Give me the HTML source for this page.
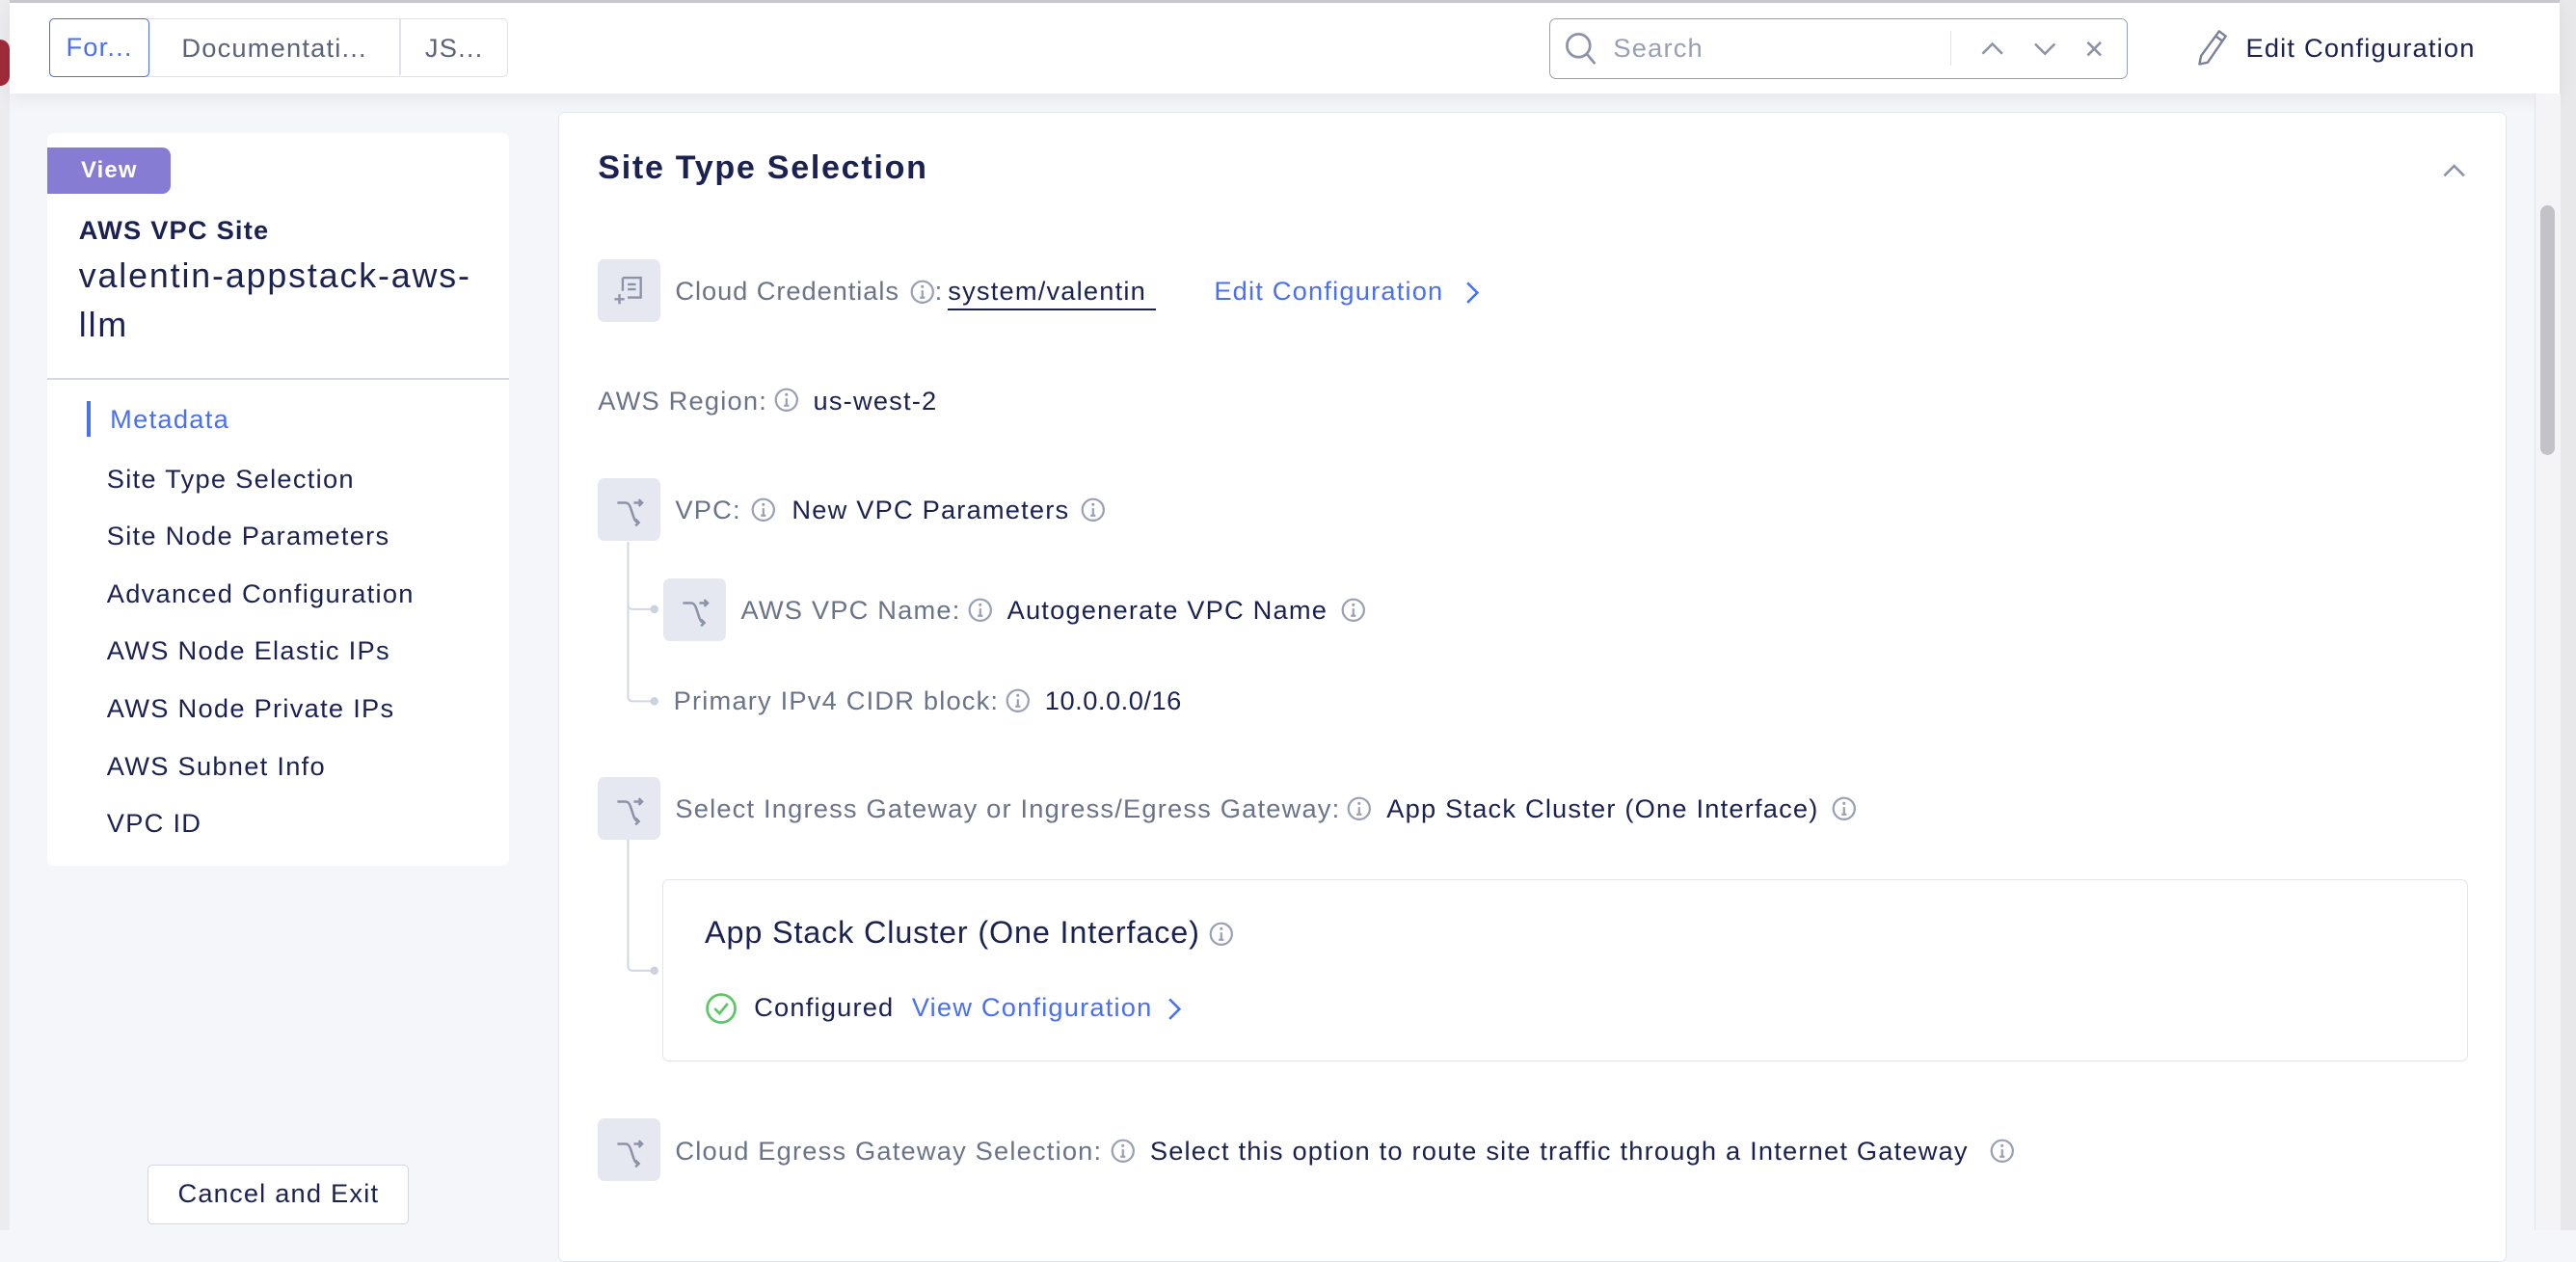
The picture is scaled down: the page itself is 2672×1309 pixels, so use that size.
<!DOCTYPE html>
<html><head><meta charset="utf-8"><style>
html,body{margin:0;padding:0;}
body{width:1568px;height:749px;zoom:1.70408;overflow:hidden;position:relative;background:#f5f6f9;font-family:"Liberation Sans",sans-serif;color:#1b2150;letter-spacing:0.7px;}
.a{position:absolute;white-space:nowrap;}
.lbl{color:#6b7388;font-size:16px;}
.val{color:#1b2150;font-size:16px;}
.ib{width:38px;height:38px;background:#e6e8f1;border-radius:4px;}
.nav{position:absolute;left:65px;font-size:16px;color:#1b2150;letter-spacing:0.75px;}
</style></head><body>
<div class="a" style="left:0;top:0;width:6px;height:749px;background:#ececef;"></div>
<div class="a" style="left:0;top:24px;width:6px;height:28px;background:#a02a3a;border-radius:0 14px 14px 0;"></div>
<div class="a" style="left:1558px;top:0;width:10px;height:749px;background:#e8e8ea;"></div>
<div class="a" style="left:6px;top:0;width:1552px;height:57px;background:#fff;border-top:2px solid #c8c8cc;box-sizing:border-box;box-shadow:0 4px 10px rgba(0,0,0,0.06);"></div>
<div class="a" style="left:30px;top:11px;width:279px;height:36px;border:1px solid #dfe2ec;border-radius:3px;box-sizing:border-box;background:#fff;"></div>
<div class="a" style="left:30px;top:11px;width:61px;height:36px;border:1px solid #4a6ff0;border-radius:3px;box-sizing:border-box;color:#4a6ff0;font-size:16px;line-height:34px;text-align:center;">For...</div>
<div class="a" style="left:91px;top:11px;width:152px;height:36px;line-height:36px;text-align:center;font-size:16px;color:#5c6378;">Documentati...</div>
<div class="a" style="left:243px;top:12px;width:1px;height:34px;background:#dfe2ec;"></div>
<div class="a" style="left:244px;top:11px;width:65px;height:36px;line-height:36px;text-align:center;font-size:16px;color:#5c6378;">JS...</div>
<div class="a" style="left:943px;top:11px;width:352px;height:37px;border:1px solid #9aa0b3;border-radius:4px;box-sizing:border-box;background:#fff;"></div>
<svg class="a" style="left:952px;top:19px" width="22" height="22" viewBox="0 0 22 22"><circle cx="9" cy="9" r="7" fill="none" stroke="#8c93a8" stroke-width="1.6"/><line x1="14" y1="14" x2="19" y2="20" stroke="#8c93a8" stroke-width="1.6"/></svg>
<div class="a" style="left:982px;top:20px;font-size:16px;color:#9aa0b3;">Search</div>
<div class="a" style="left:1187px;top:19px;width:1px;height:21px;background:#dfe2ec;"></div>
<svg class="a" style="left:1205px;top:22px" width="80" height="16" viewBox="0 0 80 16"><path d="M2 11 L8 5 L14 11" fill="none" stroke="#8c93a8" stroke-width="1.5"/><path d="M34 5 L40 11 L46 5" fill="none" stroke="#8c93a8" stroke-width="1.5"/><path d="M66 4 L74 12 M74 4 L66 12" stroke="#8c93a8" stroke-width="1.5"/></svg>
<svg class="a" style="left:1337px;top:17px" width="22" height="24" viewBox="0 0 22 24"><path d="M14 2 L18 5 L7 21 L2 22 L3 17 Z M12 5 L16 8" fill="none" stroke="#7a8196" stroke-width="1.4" stroke-linejoin="round"/></svg>
<div class="a" style="left:1367px;top:20px;font-size:16px;color:#1b2150;">Edit Configuration</div>
<div class="a" style="left:1543px;top:57px;width:15px;height:692px;background:#f4f4f6;border-left:1px solid #e4e4e8;"></div>
<div class="a" style="left:1546px;top:125px;width:9px;height:152px;background:#c3c3c7;border-radius:5px;"></div>
<div class="a" style="left:29px;top:81px;width:281px;height:446px;background:#fff;border-radius:4px;"></div>
<div class="a" style="left:29px;top:90px;width:75px;height:28px;background:#877cd4;border-radius:0 5px 5px 0;color:#fff;font-weight:bold;font-size:14px;line-height:28px;text-align:center;">View</div>
<div class="a" style="left:48px;top:131px;font-weight:bold;font-size:16px;color:#1b2150;">AWS VPC Site</div>
<div class="a" style="left:48px;top:153px;font-size:21px;line-height:30px;color:#1b2150;letter-spacing:1.1px;">valentin-appstack-aws-<br>llm</div>
<div class="a" style="left:29px;top:230px;width:281px;height:1px;background:#d3d6e3;"></div>
<div class="a" style="left:53px;top:244px;width:2px;height:22px;background:#4a6ff0;"></div>
<div class="a" style="left:67px;top:246px;font-size:16px;color:#4a6ff0;letter-spacing:0.75px;">Metadata</div>
<div class="nav" style="top:282px">Site Type Selection</div>
<div class="nav" style="top:317px">Site Node Parameters</div>
<div class="nav" style="top:352px">Advanced Configuration</div>
<div class="nav" style="top:387px">AWS Node Elastic IPs</div>
<div class="nav" style="top:422px">AWS Node Private IPs</div>
<div class="nav" style="top:457px">AWS Subnet Info</div>
<div class="nav" style="top:492px">VPC ID</div>
<div class="a" style="left:90px;top:709px;width:159px;height:36px;border:1px solid #d3d6e3;border-radius:3px;background:#fff;box-sizing:border-box;font-size:16px;line-height:34px;text-align:center;color:#1b2150;">Cancel and Exit</div>
<div class="a" style="left:340px;top:68px;width:1186px;height:700px;background:#fff;border:1px solid #e4e6ee;border-radius:4px;box-sizing:border-box;"></div>
<div class="a" style="left:364px;top:91px;font-weight:bold;font-size:20px;color:#1b2150;letter-spacing:1px;">Site Type Selection</div>
<svg class="a" style="left:1486px;top:98px" width="16" height="12"><path d="M2 9 L8 3 L14 9" fill="none" stroke="#8c93a8" stroke-width="1.5"/></svg>

<div class="a ib" style="left:364px;top:158px;"></div>
<svg class="a" style="left:372px;top:166px" width="22" height="22" viewBox="0 0 22 22"><path d="M7 3 H18 V15 H10 M10 7 H15 M10 10 H15 M5 13 V19 M2 16 H8" fill="none" stroke="#8c93a8" stroke-width="1.4"/><path d="M7 3 V11" stroke="#8c93a8" stroke-width="1.4"/></svg>
<div class="a lbl" style="left:411px;top:168px;letter-spacing:0.55px;">Cloud Credentials</div>
<svg class="a" style="left:554px;top:170px" width="15" height="15"><circle cx="7.5" cy="7.5" r="6.5" fill="none" stroke="#9aa0b3" stroke-width="1.3"/><path d="M7.5 6.5V11M6 11H9" stroke="#9aa0b3" stroke-width="1.3"/><circle cx="7.5" cy="4.3" r="0.9" fill="#9aa0b3"/></svg>
<div class="a lbl" style="left:569px;top:168px;">:</div>
<div class="a val" style="left:577px;top:168px;border-bottom:1.5px solid #1b2150;padding-bottom:1px;padding-right:6px;">system/valentin</div>
<div class="a" style="left:739px;top:168px;font-size:16px;color:#4a6ff0;">Edit Configuration</div>
<svg class="a" style="left:890px;top:170px" width="12" height="16"><path d="M3 2 L9 8 L3 14" fill="none" stroke="#4a6ff0" stroke-width="1.5"/></svg>

<div class="a lbl" style="left:364px;top:235px;">AWS Region:</div>
<svg class="a" style="left:471px;top:236px" width="15" height="15"><circle cx="7.5" cy="7.5" r="6.5" fill="none" stroke="#9aa0b3" stroke-width="1.3"/><path d="M7.5 6.5V11M6 11H9" stroke="#9aa0b3" stroke-width="1.3"/><circle cx="7.5" cy="4.3" r="0.9" fill="#9aa0b3"/></svg>
<div class="a val" style="left:495px;top:235px;">us-west-2</div>

<svg class="a" style="left:370px;top:320px" width="40" height="280"><path d="M12 10 V48 Q12 51 15 51 H27 M12 48 V104 Q12 107 15 107 H27 M12 160 V268 Q12 271 15 271 H27" fill="none" stroke="#d3d6e3" stroke-width="1.2"/><circle cx="28" cy="51" r="2.5" fill="#cdd1de"/><circle cx="28" cy="107" r="2.5" fill="#cdd1de"/><circle cx="28" cy="271" r="2.5" fill="#cdd1de"/></svg>

<div class="a ib" style="left:364px;top:291px;"></div>
<svg class="a" style="left:374px;top:301px" width="20" height="20" viewBox="0 0 20 20"><path d="M2 5 H7 Q9 5 10 8 L12 14 Q13 17 15 17 M12 5 H17 M15 3 L17 5 L15 7 M13 15 L15 17 L13 19" fill="none" stroke="#8c93a8" stroke-width="1.5"/></svg>
<div class="a lbl" style="left:411px;top:301px;">VPC:</div>
<svg class="a" style="left:457px;top:303px" width="15" height="15"><circle cx="7.5" cy="7.5" r="6.5" fill="none" stroke="#9aa0b3" stroke-width="1.3"/><path d="M7.5 6.5V11M6 11H9" stroke="#9aa0b3" stroke-width="1.3"/><circle cx="7.5" cy="4.3" r="0.9" fill="#9aa0b3"/></svg>
<div class="a val" style="left:482px;top:301px;">New VPC Parameters</div>
<svg class="a" style="left:658px;top:303px" width="15" height="15"><circle cx="7.5" cy="7.5" r="6.5" fill="none" stroke="#9aa0b3" stroke-width="1.3"/><path d="M7.5 6.5V11M6 11H9" stroke="#9aa0b3" stroke-width="1.3"/><circle cx="7.5" cy="4.3" r="0.9" fill="#9aa0b3"/></svg>

<div class="a ib" style="left:404px;top:352px;"></div>
<svg class="a" style="left:414px;top:362px" width="20" height="20" viewBox="0 0 20 20"><path d="M2 5 H7 Q9 5 10 8 L12 14 Q13 17 15 17 M12 5 H17 M15 3 L17 5 L15 7 M13 15 L15 17 L13 19" fill="none" stroke="#8c93a8" stroke-width="1.5"/></svg>
<div class="a lbl" style="left:451px;top:362px;">AWS VPC Name:</div>
<svg class="a" style="left:589px;top:364px" width="15" height="15"><circle cx="7.5" cy="7.5" r="6.5" fill="none" stroke="#9aa0b3" stroke-width="1.3"/><path d="M7.5 6.5V11M6 11H9" stroke="#9aa0b3" stroke-width="1.3"/><circle cx="7.5" cy="4.3" r="0.9" fill="#9aa0b3"/></svg>
<div class="a val" style="left:613px;top:362px;">Autogenerate VPC Name</div>
<svg class="a" style="left:816px;top:364px" width="15" height="15"><circle cx="7.5" cy="7.5" r="6.5" fill="none" stroke="#9aa0b3" stroke-width="1.3"/><path d="M7.5 6.5V11M6 11H9" stroke="#9aa0b3" stroke-width="1.3"/><circle cx="7.5" cy="4.3" r="0.9" fill="#9aa0b3"/></svg>

<div class="a lbl" style="left:410px;top:417px;">Primary IPv4 CIDR block:</div>
<svg class="a" style="left:612px;top:419px" width="15" height="15"><circle cx="7.5" cy="7.5" r="6.5" fill="none" stroke="#9aa0b3" stroke-width="1.3"/><path d="M7.5 6.5V11M6 11H9" stroke="#9aa0b3" stroke-width="1.3"/><circle cx="7.5" cy="4.3" r="0.9" fill="#9aa0b3"/></svg>
<div class="a val" style="left:636px;top:417px;letter-spacing:0.3px;">10.0.0.0/16</div>

<div class="a ib" style="left:364px;top:473px;"></div>
<svg class="a" style="left:374px;top:483px" width="20" height="20" viewBox="0 0 20 20"><path d="M2 5 H7 Q9 5 10 8 L12 14 Q13 17 15 17 M12 5 H17 M15 3 L17 5 L15 7 M13 15 L15 17 L13 19" fill="none" stroke="#8c93a8" stroke-width="1.5"/></svg>
<div class="a lbl" style="left:411px;top:483px;">Select Ingress Gateway or Ingress/Egress Gateway:</div>
<svg class="a" style="left:820px;top:485px" width="15" height="15"><circle cx="7.5" cy="7.5" r="6.5" fill="none" stroke="#9aa0b3" stroke-width="1.3"/><path d="M7.5 6.5V11M6 11H9" stroke="#9aa0b3" stroke-width="1.3"/><circle cx="7.5" cy="4.3" r="0.9" fill="#9aa0b3"/></svg>
<div class="a val" style="left:844px;top:483px;">App Stack Cluster (One Interface)</div>
<svg class="a" style="left:1115px;top:485px" width="15" height="15"><circle cx="7.5" cy="7.5" r="6.5" fill="none" stroke="#9aa0b3" stroke-width="1.3"/><path d="M7.5 6.5V11M6 11H9" stroke="#9aa0b3" stroke-width="1.3"/><circle cx="7.5" cy="4.3" r="0.9" fill="#9aa0b3"/></svg>

<div class="a" style="left:403px;top:535px;width:1099px;height:111px;border:1px solid #e1e4ec;border-radius:4px;box-sizing:border-box;"></div>
<div class="a" style="left:429px;top:557px;font-size:19px;color:#1b2150;letter-spacing:0.5px;">App Stack Cluster (One Interface)</div>
<svg class="a" style="left:736px;top:561px" width="15" height="15"><circle cx="7.5" cy="7.5" r="6.5" fill="none" stroke="#9aa0b3" stroke-width="1.3"/><path d="M7.5 6.5V11M6 11H9" stroke="#9aa0b3" stroke-width="1.3"/><circle cx="7.5" cy="4.3" r="0.9" fill="#9aa0b3"/></svg>
<svg class="a" style="left:429px;top:604px" width="20" height="20"><circle cx="10" cy="10" r="8.5" fill="none" stroke="#5cc765" stroke-width="1.6"/><path d="M6 10 L9 13 L14 7" fill="none" stroke="#5cc765" stroke-width="1.6"/></svg>
<div class="a val" style="left:459px;top:604px;">Configured</div>
<div class="a" style="left:555px;top:604px;font-size:16px;color:#4a6ff0;">View Configuration</div>
<svg class="a" style="left:709px;top:606px" width="12" height="16"><path d="M3 2 L9 8 L3 14" fill="none" stroke="#4a6ff0" stroke-width="1.5"/></svg>

<div class="a ib" style="left:364px;top:681px;"></div>
<svg class="a" style="left:374px;top:691px" width="20" height="20" viewBox="0 0 20 20"><path d="M2 5 H7 Q9 5 10 8 L12 14 Q13 17 15 17 M12 5 H17 M15 3 L17 5 L15 7 M13 15 L15 17 L13 19" fill="none" stroke="#8c93a8" stroke-width="1.5"/></svg>
<div class="a lbl" style="left:411px;top:691px;">Cloud Egress Gateway Selection:</div>
<svg class="a" style="left:676px;top:693px" width="15" height="15"><circle cx="7.5" cy="7.5" r="6.5" fill="none" stroke="#9aa0b3" stroke-width="1.3"/><path d="M7.5 6.5V11M6 11H9" stroke="#9aa0b3" stroke-width="1.3"/><circle cx="7.5" cy="4.3" r="0.9" fill="#9aa0b3"/></svg>
<div class="a val" style="left:700px;top:691px;">Select this option to route site traffic through a Internet Gateway</div>
<svg class="a" style="left:1211px;top:693px" width="15" height="15"><circle cx="7.5" cy="7.5" r="6.5" fill="none" stroke="#9aa0b3" stroke-width="1.3"/><path d="M7.5 6.5V11M6 11H9" stroke="#9aa0b3" stroke-width="1.3"/><circle cx="7.5" cy="4.3" r="0.9" fill="#9aa0b3"/></svg>
</body></html>
